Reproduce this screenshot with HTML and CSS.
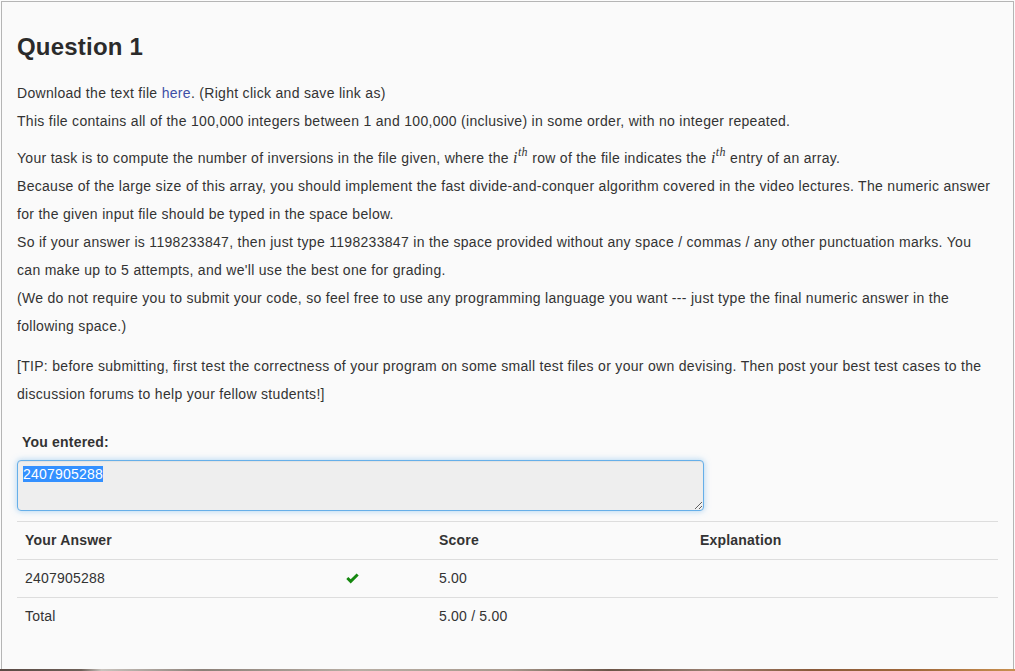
FILE: index.html
```html
<!DOCTYPE html>
<html>
<head>
<meta charset="utf-8">
<title>Question 1</title>
<link rel="stylesheet" href="styles.css">
</head>
<body>
<div class="frame">
  <h3 class="title">Question 1</h3>
  <p class="para p1">Download the text file <a href="#" class="link">here</a>. (Right click and save link as)<br>
  This file contains all of the 100,000 integers between 1 and 100,000 (inclusive) in some order, with no integer repeated.</p>
  <p class="para p2">Your task is to compute the number of inversions in the file given, where the <span class="math"><i>i</i><sup class="msup"><i>th</i></sup></span> row of the file indicates the <span class="math"><i>i</i><sup class="msup"><i>th</i></sup></span> entry of an array.<br>
  Because of the large size of this array, you should implement the fast divide-and-conquer algorithm covered in the video lectures. The numeric answer for the given input file should be typed in the space below.<br>
  So if your answer is 1198233847, then just type 1198233847 in the space provided without any space / commas / any other punctuation marks. You can make up to 5 attempts, and we'll use the best one for grading.<br>
  (We do not require you to submit your code, so feel free to use any programming language you want --- just type the final numeric answer in the following space.)</p>
  <p class="para p3">[TIP: before submitting, first test the correctness of your program on some small test files or your own devising. Then post your best test cases to the discussion forums to help your fellow students!]</p>

  <div class="entered">
    <div class="label">You entered:</div>
    <div class="answerbox"><span class="sel">2407905288 </span></div>
  </div>

  <table class="results">
    <colgroup>
      <col class="c1"><col class="c2"><col class="c3"><col class="c4">
    </colgroup>
    <thead>
      <tr><th>Your Answer</th><th></th><th>Score</th><th>Explanation</th></tr>
    </thead>
    <tbody>
      <tr>
        <td>2407905288</td>
        <td><svg class="check" width="13" height="11" viewBox="0 0 13 11"><polygon points="0.3,6 2.3,3.9 4.7,6.3 10.6,0.4 12.7,2.5 4.7,10.6" fill="#15880f"/></svg></td>
        <td>5.00</td>
        <td></td>
      </tr>
      <tr>
        <td>Total</td>
        <td></td>
        <td>5.00 / 5.00</td>
        <td></td>
      </tr>
    </tbody>
  </table>
</div>
<div class="strip"></div>
</body>
</html>
```

FILE: styles.css
```css
html, body {
  margin: 0;
  padding: 0;
}
body {
  background: #fbfbfb;
  font-family: "Liberation Sans", Arial, sans-serif;
  font-size: 14px;
  letter-spacing: 0.3px;
  color: #333;
  overflow: hidden;
}
.frame {
  margin: 1px 1px 0 1px;
  border: 1px solid #b5b5b5;
  border-bottom: none;
  box-sizing: border-box;
  height: 668px;
  padding: 0 15px;
  background: #fafafa;
  overflow: hidden;
}
.title {
  margin: 31px 0 0 0;
  font-size: 24px;
  line-height: 27px;
  font-weight: bold;
  letter-spacing: 0.2px;
  color: #2b2b2b;
}
.para {
  margin: 0;
  line-height: 28px;
}
.p1 { margin-top: 19px; margin-bottom: 9px; }
.p2 { margin-bottom: 12px; }
.link {
  color: #3d4fa6;
  text-decoration: none;
}
.math {
  font-family: "Liberation Serif", "DejaVu Serif", serif;
  font-size: 16px;
  letter-spacing: 0.4px;
  line-height: 0;
}
.msup {
  font-size: 12px;
  line-height: 0;
  vertical-align: 0.55em;
}
.entered {
  margin-top: 24px;
}
.label {
  padding-left: 5px;
  font-weight: bold;
  line-height: 20px;
  letter-spacing: 0.2px;
  color: #333;
}
.answerbox {
  margin-top: 8px;
  width: 687px;
  height: 51px;
  box-sizing: border-box;
  border: 1px solid #66afe9;
  border-radius: 4px;
  background: #eeeeee;
  box-shadow: inset 0 1px 1px rgba(0,0,0,0.05), 0 0 6px rgba(102,175,233,0.55);
  padding: 6px 5px;
  line-height: 15px;
  letter-spacing: 0.2px;
  color: #555;
  resize: vertical;
  overflow: hidden;
}
.sel {
  background: #3390ff;
  color: #fff;
}
.results {
  margin-top: 10px;
  width: 981px;
  border-collapse: collapse;
  table-layout: fixed;
  letter-spacing: 0.2px;
}
.c1 { width: 321px; }
.c2 { width: 93px; }
.c3 { width: 261px; }
.c4 { width: auto; }
.results th,
.results td {
  border-top: 1px solid #dddddd;
  padding: 8px;
  line-height: 21px;
  text-align: left;
  vertical-align: top;
}
.results th {
  font-weight: bold;
  color: #333;
}
.results td {
  color: #333;
}
.check {
  display: block;
  margin-top: 5px;
}
.strip {
  height: 2px;
  background: linear-gradient(to right, #5a4a44 0%, #6e6058 8%, #c9c3bd 10%, #8c8078 20%, #b8aea4 35%, #a89a8e 50%, #6b5548 60%, #9a8072 70%, #8a5a3a 80%, #a0683a 90%, #c89050 100%);
}
```
